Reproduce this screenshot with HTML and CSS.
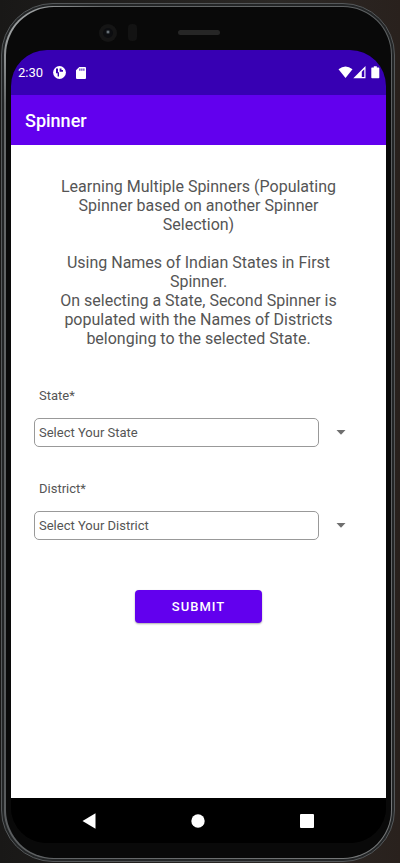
FILE: index.html
```html
<!DOCTYPE html>
<html lang="en">
<head>
<meta charset="utf-8">
<meta name="viewport" content="width=device-width, initial-scale=1">
<title>Spinner</title>
<link rel="stylesheet" href="styles.css">
</head>
<body>
<div class="phone">
  <div class="rim">
    <div class="bezel">
      <div class="earpiece">
        <svg class="sensors" width="44" height="22" viewBox="0 0 44 22" aria-hidden="true">
          <circle cx="11" cy="11" r="9" fill="#151515"/>
          <circle cx="11" cy="11" r="5" fill="#0c0d10"/>
          <circle cx="11" cy="10" r="2" fill="#343a40"/>
          <circle cx="11" cy="10" r="1" fill="#7b838a"/>
          <rect x="31" y="2" width="9" height="17" rx="4" fill="#131313"/>
        </svg>
        <span class="speaker"></span>
      </div>
      <div class="screen">
        <div class="status">
          <span class="clock">2:30</span>
          <svg width="13" height="13" viewBox="0 0 13 13" aria-hidden="true">
            <circle cx="6.500" cy="6.500" r="6.400" fill="#fff"/>
            <path d="M3 2.500H5V6.200H6V10.600H4.600V7.300H3ZM6.600 2.500H8.500V4H10V5.800H6.600Z" fill="#3700b3"/>
          </svg>
          <svg width="10" height="12" viewBox="0 0 10 12" aria-hidden="true">
            <path d="M3.300 0H9Q10 0 10 1V11Q10 12 9 12H1Q0 12 0 11V3.300Z" fill="#fff"/>
            <path d="M3.400 1.500h1v2.200h-1zM5.400 1.500h1v2.200h-1zM7.400 1.500h1v2.200h-1z" fill="#3700b3"/>
          </svg>
          <svg class="signals" width="42" height="13" viewBox="0 0 42 13" aria-hidden="true">
            <path d="M0.500 3.200Q7.500 -2.400 14.500 3.200L7.500 12Z" fill="#fff"/>
            <path d="M27.500 0V12.200H15.300ZM26.300 3.300 23.800 5.800V11H26.300Z" fill="#fff" fill-rule="evenodd"/>
            <path d="M35.800 0.200h3v1.200h1.800q.7 0 .7.700v9.500q0 .7-.7.700h-6.600q-.7 0-.7-.7V2.100q0-.7.7-.7H35.800Z" fill="#fff"/>
          </svg>
        </div>
        <header class="appbar"><h1>Spinner</h1></header>
        <main class="content">
          <p class="intro">Learning Multiple Spinners (Populating Spinner based on another Spinner Selection)<br><br>Using Names of Indian States in First Spinner.<br>On selecting a State, Second Spinner is populated with the Names of Districts belonging to the selected State.</p>
          <form class="form">
            <div class="field">
              <label for="state">State*</label>
              <div class="spinner">
                <select id="state"><option>Select Your State</option></select>
                <svg width="10" height="5" viewBox="0 0 10 5" aria-hidden="true"><path d="M0.500 0H9.500L5 4.700Z" fill="#6f6f6f"/></svg>
              </div>
            </div>
            <div class="field">
              <label for="district">District*</label>
              <div class="spinner">
                <select id="district"><option>Select Your District</option></select>
                <svg width="10" height="5" viewBox="0 0 10 5" aria-hidden="true"><path d="M0.500 0H9.500L5 4.700Z" fill="#6f6f6f"/></svg>
              </div>
            </div>
            <button class="submit" type="button">SUBMIT</button>
          </form>
        </main>
        <nav class="navbar">
          <button type="button" aria-label="Back"><svg width="14" height="16" viewBox="0 0 14 16"><path d="M0.500 8 13.500 0.300V15.700Z" fill="#fff"/></svg></button>
          <button type="button" aria-label="Home"><svg width="14" height="14" viewBox="0 0 14 14"><circle cx="7" cy="7" r="6.700" fill="#fff"/></svg></button>
          <button type="button" aria-label="Recent apps"><svg width="14" height="14" viewBox="0 0 14 14"><rect width="14" height="14" rx="1" fill="#fff"/></svg></button>
        </nav>
      </div>
    </div>
  </div>
</div>
</body>
</html>
```
FILE: styles.css
```css
* { box-sizing: border-box; }

body {
  margin: 0;
  min-height: 100vh;
  padding: 3px 5px 1px 1px;
  display: flex;
  background: linear-gradient(90deg, #191817, #2b2825 70%, #29211d);
  font-family: Roboto, sans-serif;
  color: #555;
}

.phone {
  flex: 1;
  display: flex;
  padding: 2px;
  border: 1px solid #55585a;
  border-radius: 52px;
  background: #232526;
}

.rim {
  flex: 1;
  display: flex;
  padding: 1px 1px 1px 2px;
  border-radius: 49px;
  background: linear-gradient(135deg, #b5b8b9, #656869 8%, #55585a 60%, #77797a);
}

.bezel {
  flex: 1;
  display: flex;
  flex-direction: column;
  padding: 0 5px 15px;
  border-radius: 48px;
  background: #090909;
}

.earpiece {
  height: 43px;
  position: relative;
  display: flex;
  justify-content: center;
  padding-top: 23px;
}

.sensors {
  position: absolute;
  left: 86px;
  top: 15px;
}

.speaker {
  width: 42px;
  height: 5px;
  border-radius: 3px;
  background: #262626;
}

.screen {
  flex: 1;
  display: flex;
  flex-direction: column;
  border-radius: 36px;
  overflow: hidden;
  background: #000;
}

.status {
  height: 45px;
  padding: 0 6px 0 7px;
  display: flex;
  align-items: center;
  gap: 10px;
  background: #3700b3;
  color: #fff;
}

.clock { font-size: 13px; }

.signals { margin-left: auto; }

.appbar {
  height: 50px;
  padding: 0 14px;
  display: flex;
  align-items: center;
  background: #6200ee;
  color: #fff;
}

.appbar h1 {
  margin: 0;
  font-size: 18px;
  font-weight: 500;
}

.content {
  flex: 1;
  padding: 32px 23px;
  background: #fff;
}

.intro {
  margin: 0 20px;
  font-size: 16px;
  line-height: 19px;
  text-align: center;
}

.form {
  margin-top: 40px;
  display: flex;
  flex-direction: column;
}

.field {
  margin-bottom: 34px;
  font-size: 13px;
}

.field label {
  display: block;
  padding-left: 5px;
  line-height: 16px;
}

.spinner {
  margin-top: 14px;
  padding-right: 17px;
  display: flex;
  align-items: center;
  gap: 17px;
}

.spinner select {
  flex: 1;
  height: 29px;
  padding: 0 4px;
  appearance: none;
  border: 1px solid #999;
  border-radius: 5px;
  background: #fff;
  font: inherit;
  color: inherit;
}

.submit {
  align-self: center;
  margin-top: 16px;
  width: 127px;
  height: 33px;
  border: 0;
  border-radius: 4px;
  background: #6200ee;
  box-shadow: 0 1px 2px #0005;
  color: #fff;
  font: 500 13px Roboto, sans-serif;
  letter-spacing: 1px;
}

.navbar {
  height: 45px;
  padding: 0 25px 0 23px;
  display: flex;
  background: #000;
}

.navbar button {
  flex: 1;
  display: flex;
  align-items: center;
  justify-content: center;
  padding: 0;
  border: 0;
  background: none;
}
```
